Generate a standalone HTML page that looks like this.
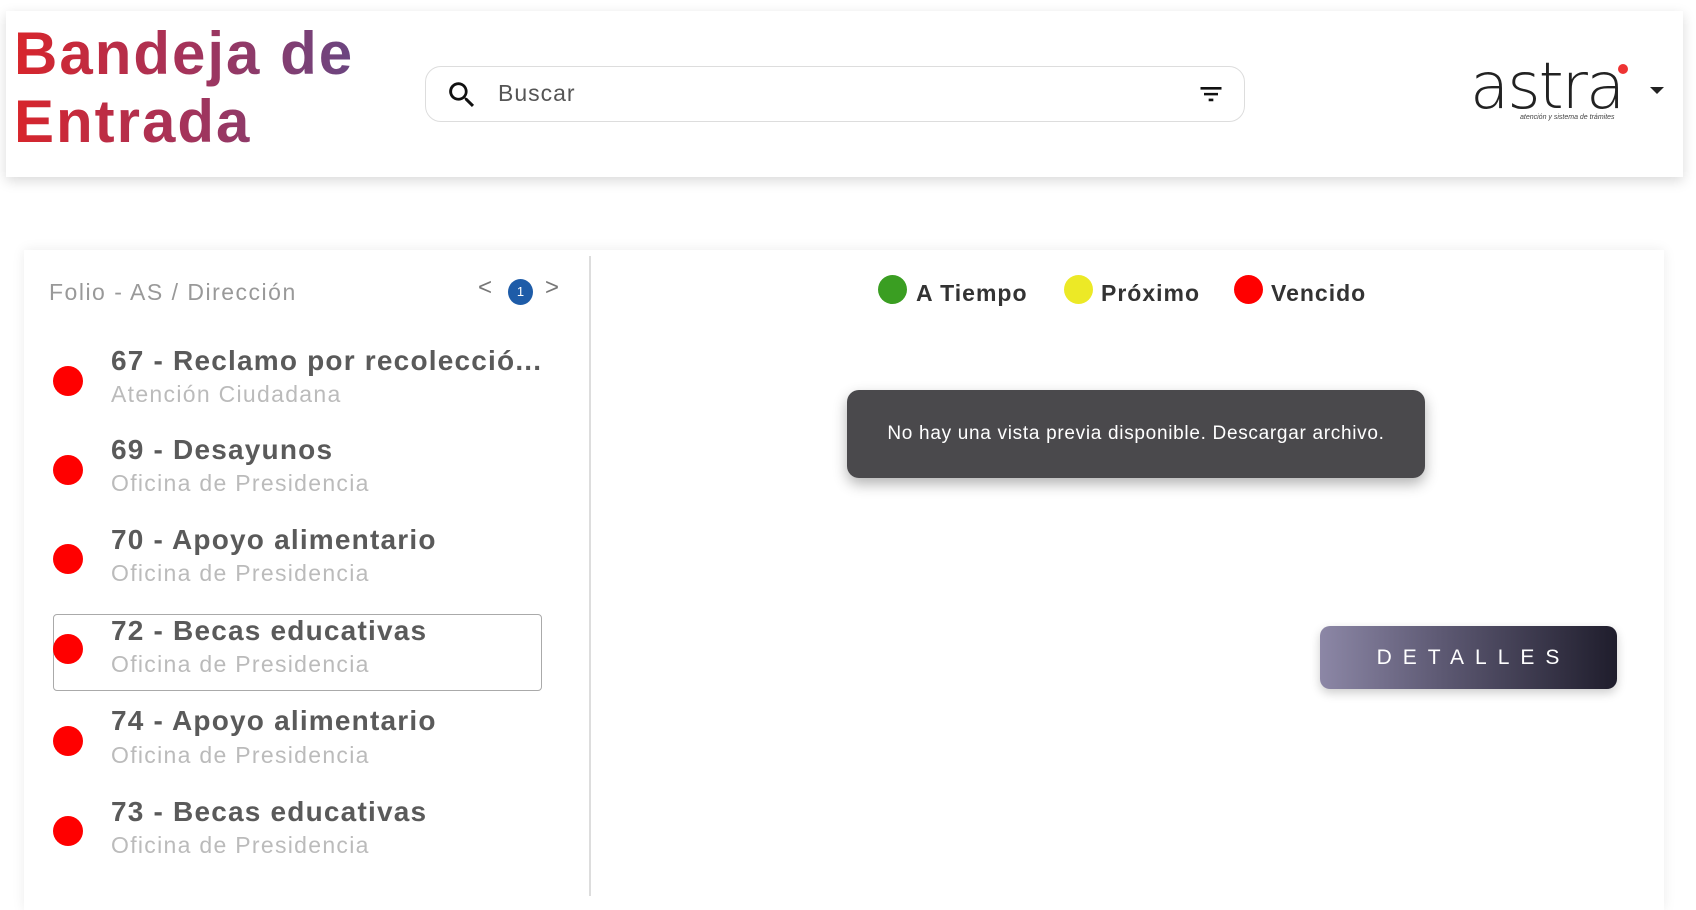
<!DOCTYPE html>
<html><head><meta charset="utf-8"><style>
*{margin:0;padding:0;box-sizing:border-box}
body{width:1696px;height:870px;overflow:hidden;background:#fff;font-family:"Liberation Sans",sans-serif;position:relative}
.abs{position:absolute}
.header{left:6px;top:11px;width:1677px;height:166px;background:#fff;box-shadow:0 4px 12px rgba(0,0,0,.15)}
.title{left:14px;top:20px;font-weight:bold;font-size:60px;letter-spacing:2px;line-height:68px;background:linear-gradient(90deg,#d8252b 0%,#a5335a 45%,#5c4a8a 100%);-webkit-background-clip:text;background-clip:text;color:transparent;width:380px}
.search{left:425px;top:66px;width:820px;height:56px;border:1px solid #ddd;border-radius:16px;background:#fff}
.card{left:24px;top:250px;width:1640px;height:660px;background:#fff;box-shadow:0 0 12px rgba(0,0,0,.08)}
.div{left:589px;top:256px;width:2px;height:620px;background:#ddd}
.t{color:#5a5a5a;font-weight:bold;font-size:28px;letter-spacing:1.2px;left:111px;white-space:nowrap}
.s{color:#bbb;font-size:23px;letter-spacing:1.3px;left:111px;white-space:nowrap}
.dot{width:30px;height:30px;border-radius:50%;background:#f00;left:53px}
.lg{font-weight:bold;font-size:23px;letter-spacing:1px;color:#333}
.ld{width:29px;height:29px;border-radius:50%}
</style></head><body>
<div class="abs header"></div>
<div class="abs title">Bandeja de Entrada</div>
<div class="abs search"></div>
<svg class="abs" style="left:445px;top:78px" width="34" height="34" viewBox="0 0 24 24"><path d="M15.5 14h-.8l-.3-.3A6.5 6.5 0 1 0 9.5 16a6.5 6.5 0 0 0 4.2-1.6l.3.3v.8l5 5 1.5-1.5-5-5zm-6 0A4.5 4.5 0 1 1 14 9.5 4.5 4.5 0 0 1 9.5 14z" fill="#111"/></svg>
<div class="abs" style="left:498px;top:80px;font-size:23px;letter-spacing:1px;color:#555">Buscar</div>
<svg class="abs" style="left:1197px;top:80px" width="28" height="28" viewBox="0 0 24 24"><path d="M3 6h18v2.2H3zM6 11h12v2.2H6zM10 16h4v2.2h-4z" fill="#111"/></svg>
<div class="abs" style="left:1470px;top:50px;font-size:64px;color:#222;letter-spacing:-2px;font-family:'DejaVu Sans',sans-serif;font-weight:200">astra</div>
<div class="abs" style="left:1618px;top:64px;width:10px;height:10px;border-radius:50%;background:#e33"></div>
<div class="abs" style="left:1520px;top:114px;font-size:7px;font-style:italic;color:#444">atención y sistema de trámites</div>
<div class="abs" style="left:1650px;top:87px;width:0;height:0;border-left:7px solid transparent;border-right:7px solid transparent;border-top:7px solid #222"></div>
<div class="abs card"></div>
<div class="abs div" style="height:640px"></div>
<div class="abs" style="left:49px;top:279px;font-size:23px;letter-spacing:1.5px;color:#999">Folio - AS / Dirección</div>
<div class="abs" style="left:478px;top:274px;font-size:24px;color:#777">&lt;</div>
<div class="abs" style="left:508px;top:279px;width:25px;height:26px;border-radius:50%;background:#1e5ca8;color:#fff;font-size:13px;text-align:center;line-height:26px">1</div>
<div class="abs" style="left:545px;top:274px;font-size:24px;color:#777">&gt;</div>
<div class="abs" style="left:53px;top:614px;width:489px;height:77px;border:1.5px solid #aaa;border-radius:4px"></div>
<div class="abs dot" style="top:366px"></div><div class="abs t" style="top:345px">67 - Reclamo por recolecció...</div><div class="abs s" style="top:381px">Atención Ciudadana</div>
<div class="abs dot" style="top:455px"></div><div class="abs t" style="top:434px">69 - Desayunos</div><div class="abs s" style="top:470px">Oficina de Presidencia</div>
<div class="abs dot" style="top:544px"></div><div class="abs t" style="top:524px">70 - Apoyo alimentario</div><div class="abs s" style="top:560px">Oficina de Presidencia</div>
<div class="abs dot" style="top:634px"></div><div class="abs t" style="top:615px">72 - Becas educativas</div><div class="abs s" style="top:651px">Oficina de Presidencia</div>
<div class="abs dot" style="top:726px"></div><div class="abs t" style="top:705px">74 - Apoyo alimentario</div><div class="abs s" style="top:742px">Oficina de Presidencia</div>
<div class="abs dot" style="top:816px"></div><div class="abs t" style="top:796px">73 - Becas educativas</div><div class="abs s" style="top:832px">Oficina de Presidencia</div>
<div class="abs ld" style="left:878px;top:275px;background:#3a9e22"></div><div class="abs lg" style="left:916px;top:280px">A Tiempo</div>
<div class="abs ld" style="left:1064px;top:275px;background:#ece926"></div><div class="abs lg" style="left:1101px;top:280px">Próximo</div>
<div class="abs ld" style="left:1234px;top:275px;background:#f00"></div><div class="abs lg" style="left:1271px;top:280px">Vencido</div>
<div class="abs" style="left:847px;top:390px;width:578px;height:88px;background:#4a494c;border-radius:12px;box-shadow:0 6px 14px rgba(0,0,0,.3);color:#fff;font-size:19px;letter-spacing:0.7px;text-align:center;line-height:88px;white-space:nowrap">No hay una vista previa disponible. Descargar archivo.</div>
<div class="abs" style="left:1320px;top:626px;width:297px;height:63px;border-radius:10px;background:linear-gradient(90deg,#8c87a6,#5e5a74 40%,#1f1d2c);box-shadow:0 4px 10px rgba(0,0,0,.2);color:#fff;font-size:21px;letter-spacing:11px;text-align:center;line-height:63px;padding-left:10px">DETALLES</div>
</body></html>
